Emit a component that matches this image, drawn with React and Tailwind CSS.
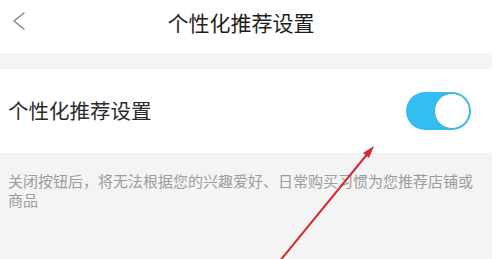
import React from 'react';

const font = { fontFamily: '"Noto Sans CJK SC", "Noto Sans", sans-serif' };

const Toggle = () => (
  <div className="w-[65px] h-[38px] rounded-full bg-[#33bdf2] flex items-center justify-end p-px">
    <div className="w-[36px] h-[36px] rounded-full bg-white border-[1.5px] border-[#4aa9c8]" />
  </div>
);

export default function App() {
  return (
    <div className="relative w-[498px] h-[259px] bg-white overflow-hidden flex flex-col" style={font}>
      {/* Header */}
      <div className="relative h-[53px] flex items-center justify-center shrink-0">
        <svg className="absolute left-[11px] top-[12px]" width="16" height="18" viewBox="0 0 16 18">
          <path d="M13 1 L3 9 L13 17" fill="none" stroke="#808080" strokeWidth="1.4" strokeLinecap="round" strokeLinejoin="round" />
        </svg>
        <span className="text-[21px] text-[#1e1e1e] leading-none -mt-[8px] mr-[16px]">个性化推荐设置</span>
      </div>

      <div className="h-[16px] bg-[#f4f4f4] mr-[6px] shrink-0" />

      {/* Setting row */}
      <div className="h-[84px] flex items-center justify-between pl-[8px] pr-[27px] shrink-0">
        <span className="text-[20.5px] text-[#2a2a2a] leading-none -mt-[1px]">个性化推荐设置</span>
        <Toggle />
      </div>

      {/* Description */}
      <div className="flex-1 bg-[#f4f4f4] mr-[6px] pt-[19px] pl-[8px] pr-[8px]">
        <p className="text-[15px] leading-[18.5px] text-[#9c9c9c]">
          关闭按钮后，将无法根据您的兴趣爱好、日常购买习惯为您推荐店铺或商品
        </p>
      </div>

      {/* Red annotation arrow */}
      <svg className="absolute left-0 top-0 pointer-events-none" width="498" height="259" viewBox="0 0 498 259">
        <line x1="279" y1="262" x2="369" y2="152" stroke="#d42a33" strokeWidth="2" strokeLinecap="round" />
        <polygon points="374,146 363,153 369,158" fill="#d42a33" />
      </svg>
    </div>
  );
}
